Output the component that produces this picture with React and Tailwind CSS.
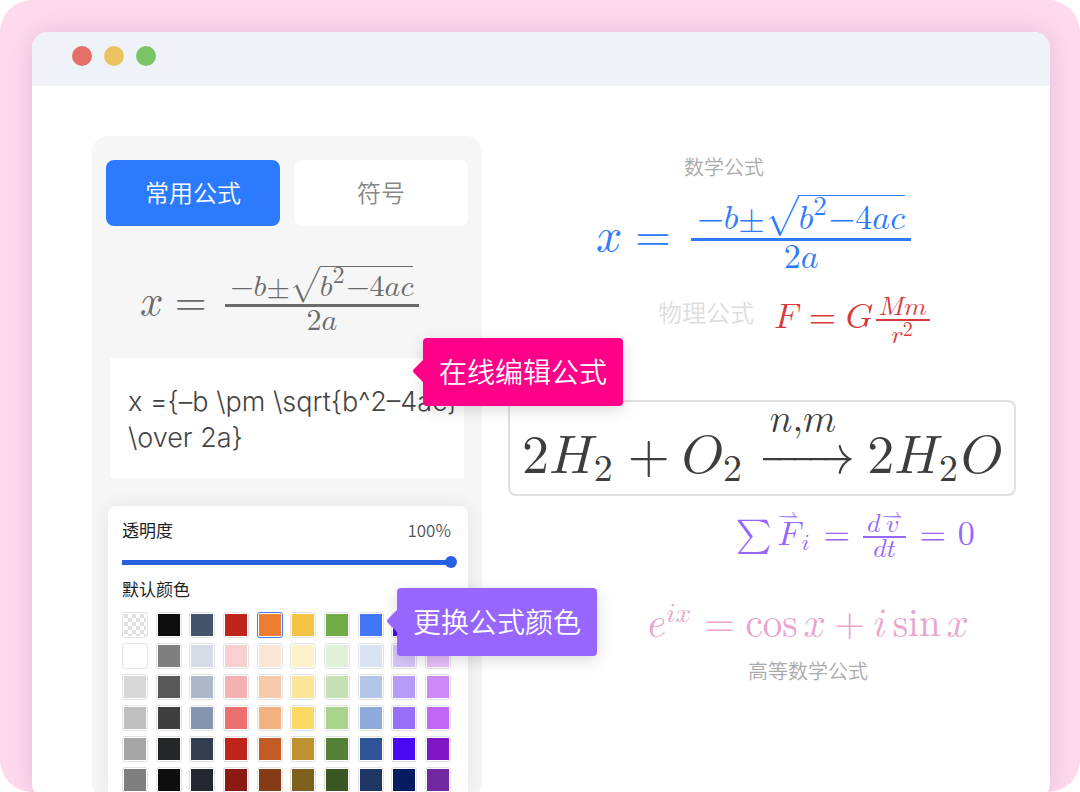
import { useState } from 'react';

const swatches = [
    ['transparent', '#0d0d0d', '#44546a', '#bf261b', '#ed7d31', '#f6c243', '#70ad47', '#4177f6', '#4a07f5', '#8b1fd0'],
    ['#ffffff', '#7f7f7f', '#d5dce6', '#f8d0d0', '#fbe5d7', '#fef2cd', '#e0f0d9', '#d9e3f4', '#d5c8fb', '#e6bdfb'],
    ['#d8d8d8', '#585858', '#adb8ca', '#f3b1b1', '#f7caac', '#fbe699', '#c5e0b3', '#b3c5e7', '#b59cf9', '#cd8af7'],
    ['#bfbfbf', '#3f3f3f', '#8495b1', '#ed7070', '#f3b182', '#f9da64', '#a9d28d', '#8ea9db', '#9870f7', '#bf66f6'],
    ['#a5a5a5', '#252628', '#333e50', '#bf261b', '#c55b24', '#bf9230', '#538135', '#2f5597', '#4a07f5', '#7f17c4'],
    ['#7f7f7f', '#0d0d0d', '#232830', '#8b1a12', '#843c16', '#7e611c', '#385723', '#203765', '#061c61', '#7029a0'],
];

const mathFont = 'font-["Latin_Modern_Math","Liberation_Serif",serif]';

// Operator without the surrounding spacing, as in script-size expressions
function Op({ children }) {
    return <mo lspace="0" rspace="0">{children}</mo>;
}

function Sub({ children }) {
    return <mpadded voffset="0.14em">{children}</mpadded>;
}

function Quadratic({ className, small, tiny }) {
    return (
        <math className={`${mathFont} ${className}`}>
            <mi>x</mi><mo>=</mo><mspace width="0.17em" />
            <mfrac linethickness="3px">
                <mpadded depth="0.2em" className={small}>
                    <mspace width="0.17em" /><Op>−</Op><mi>b</mi><Op>±</Op>
                    <msqrt>
                        <mspace height="0.9em" depth="0.15em" />
                        <msup><mi>b</mi><mn className={tiny}>2</mn></msup><Op>−</Op><mn>4</mn><mi>a</mi><mi>c</mi>
                    </msqrt>
                    <mspace width="0.12em" />
                </mpadded>
                <mpadded height="0.74em" className={small}><mn>2</mn><mi>a</mi></mpadded>
            </mfrac>
        </math>
    );
}

function Gravity({ className }) {
    return (
        <math className={`${mathFont} ${className}`}>
            <mi>F</mi><mspace width="0.07em" /><mo>=</mo><mi>G</mi><mspace width="0.07em" />
            <mfrac linethickness="2px">
                <mrow className="text-[26px]"><mspace width="0.12em" /><mi>M</mi><mi>m</mi><mspace width="0.12em" /></mrow>
                <msup className="text-[26px]"><mi>r</mi><mn className="text-[20px]">2</mn></msup>
            </mfrac>
        </math>
    );
}

function Water({ className }) {
    return (
        <math className={`${mathFont} ${className}`}>
            <mn>2</mn><msub><mi>H</mi><Sub><mn>2</mn></Sub></msub><mo>+</mo><msub><mi>O</mi><Sub><mn>2</mn></Sub></msub>
            <mover>
                <mo stretchy="true" lspace="0.17em">→</mo>
                <mpadded voffset="-0.12em"><mspace width="0.42em" /><mi>n</mi><Op>,</Op><mi>m</mi><mspace width="0.42em" /></mpadded>
            </mover>
            <mn>2</mn><msub><mi>H</mi><Sub><mn>2</mn></Sub></msub><mi>O</mi>
        </math>
    );
}

function Vector({ children }) {
    return (
        <mover><mi>{children}</mi><mo stretchy="false" className="text-[20px]">⇀</mo></mover>
    );
}

function Newton({ className }) {
    return (
        <math className={`${mathFont} ${className}`}>
            <mo>∑</mo>
            <msub><Vector>F</Vector><Sub><mspace width="0.1em" /><mi>i</mi></Sub></msub>
            <mspace width="0.07em" /><mo>=</mo><mspace width="0.12em" />
            <mfrac linethickness="2px">
                <mrow className="text-[26px]"><mspace width="0.14em" /><mi>d</mi><mspace width="0.07em" /><Vector>v</Vector><mspace width="0.14em" /></mrow>
                <mrow className="text-[26px]"><mi>d</mi><mi>t</mi></mrow>
            </mfrac>
            <mspace width="0.12em" /><mo>=</mo><mspace width="0.07em" /><mn>0</mn>
        </math>
    );
}

function Euler({ className }) {
    return (
        <math className={`${mathFont} ${className}`}>
            <msup><mi>e</mi><mrow><mi>i</mi><mi>x</mi></mrow></msup>
            <mo>=</mo><mi>cos</mi><mspace width="0.15em" /><mi>x</mi>
            <mo>+</mo><mi>i</mi><mspace width="0.15em" /><mi>sin</mi><mspace width="0.15em" /><mi>x</mi>
        </math>
    );
}

function Callout({ children, className, arrow }) {
    return (
        <div className={`absolute z-10 flex h-[68px] w-[200px] items-center justify-center rounded pb-0.5 text-[28px] font-[350] text-white shadow-[0_4px_16px_rgba(0,0,0,0.15)] ${className}`}>
            <svg className={`absolute -left-[10px] h-6 w-[11px] ${arrow}`} viewBox="0 0 11 24" fill="currentColor">
                <path d="M11 0v24L1 14q-2-2 0-4z" />
            </svg>
            {children}
        </div>
    );
}

function Swatch({ color, selected, onSelect }) {
    return (
        <button
            type="button"
            aria-label={color}
            onClick={onSelect}
            className={`size-[26px] rounded-[3px] border bg-white p-px ${selected ? 'border-[#4177f6]' : 'border-[#e2e2e2]'}`}
        >
            {color === 'transparent' ? (
                <span className="block size-[22px] bg-[repeating-conic-gradient(#fff_0_25%,#e0e0e0_0_50%)] bg-size-[8px_8px]" />
            ) : (
                <span className="block size-[22px]" style={{ backgroundColor: color }} />
            )}
        </button>
    );
}

export default function App() {
    const [tex, setTex] = useState('x ={–b \\pm \\sqrt{b^2–4ac}\n\\over 2a}');
    const [opacity, setOpacity] = useState(100);
    const [color, setColor] = useState('0-4');

    return (
        <main className='h-screen overflow-hidden rounded-[32px] bg-[#ffdaee] pt-8 pr-[30px] pl-8 font-["Noto_Sans_CJK_SC",sans-serif]'>
            <div className="min-h-[768px] overflow-hidden rounded-2xl bg-white shadow-[0_0_24px_rgba(120,80,140,0.22)]">
                <header className="flex h-[54px] items-start gap-3 bg-[#eff2f8] px-10 pt-[14px]">
                    <span className="size-5 rounded-full bg-[#e27069]" />
                    <span className="size-5 rounded-full bg-[#e9c362]" />
                    <span className="size-5 rounded-full bg-[#7cc267]" />
                </header>

                <div className="flex gap-[26px] pt-[50px] pr-[34px] pl-[60px]">
                    <section className="relative h-[662px] w-[390px] shrink-0 rounded-2xl bg-[#f6f6f6] pt-6">
                        <div className="flex gap-[14px] px-[14px] text-2xl font-[350]">
                            <button type="button" className="h-[66px] flex-1 rounded-lg bg-[#2c7bff] pb-0.5 text-white">常用公式</button>
                            <button type="button" className="h-[66px] flex-1 rounded-lg bg-white pb-0.5 text-[#888]">符号</button>
                        </div>

                        <div className="flex h-[132px] items-center pt-2.5 pl-12">
                            <Quadratic className="text-[41px] text-[#6b6b6b]" small="text-[30px]" tiny="text-[24px]" />
                        </div>

                        <textarea
                            aria-label="公式"
                            value={tex}
                            onChange={(e) => setTex(e.target.value)}
                            className='mx-[18px] block h-[120px] w-[354px] resize-none overflow-hidden bg-white py-[26px] pl-[18px] font-["Inter",sans-serif] text-[27px] leading-9 font-light text-[#444]'
                        />

                        <div className="mt-7 mr-[14px] ml-4 h-[292px] rounded-lg bg-white px-[14px] pt-3 shadow-[0_0_20px_rgba(0,0,0,0.08)]">
                            <div className="flex items-center justify-between pr-[3px] text-[17px] leading-6 text-[#222]">
                                <label htmlFor="opacity">透明度</label>
                                <output htmlFor="opacity" className="font-[350] text-[#555]">{opacity}%</output>
                            </div>
                            <input
                                id="opacity"
                                type="range"
                                value={opacity}
                                onChange={(e) => setOpacity(e.target.value)}
                                className="mt-[14px] block h-3 w-[335px] appearance-none bg-[linear-gradient(#2861e0,#2861e0)] bg-size-[330px_5px] bg-left bg-no-repeat [&::-webkit-slider-thumb]:size-3 [&::-webkit-slider-thumb]:appearance-none [&::-webkit-slider-thumb]:rounded-full [&::-webkit-slider-thumb]:bg-[#2861e0]"
                            />
                            <h2 className="mt-[9px] text-[17px] leading-6 text-[#222]">默认颜色</h2>
                            <div className="mt-[11px] flex flex-col gap-[5px]">
                                {swatches.map((row, r) => (
                                    <div key={r} className="flex w-[329px] justify-between">
                                        {row.map((c, i) => (
                                            <Swatch key={i} color={c} selected={color === `${r}-${i}`} onSelect={() => setColor(`${r}-${i}`)} />
                                        ))}
                                    </div>
                                ))}
                            </div>
                        </div>

                        <Callout className="top-[202px] left-[331px] bg-[#ff0088]" arrow="text-[#ff0088]">在线编辑公式</Callout>
                        <Callout className="top-[452px] left-[305px] bg-[#9666ff]" arrow="text-[#9666ff]">更换公式颜色</Callout>
                    </section>

                    <section className="flex min-w-0 flex-1 flex-col items-start pt-4">
                        <p className="ml-[176px] text-xl leading-[30px] font-[350] text-[#aaa]">数学公式</p>
                        <div className="ml-[88px] flex h-[96px] items-center">
                            <Quadratic className="text-[46px] text-[#2c7bff]" small="text-[34px]" tiny="text-[27px]" />
                        </div>
                        <div className="mt-3 ml-[150px] flex h-[60px] items-center gap-5 text-2xl font-[350] text-[#ddd]">
                            <span className="pb-4">物理公式</span>
                            <Gravity className="text-[35px] text-[#d93a3a]" />
                        </div>
                        <div className="mt-[50px] flex h-24 w-full items-center justify-center rounded-lg border-2 border-[#e0e0e0]">
                            <Water className="text-[54px] text-[#3d3d3d]" />
                        </div>
                        <div className="ml-[222px] flex h-[76px] items-center">
                            <Newton className="text-[34px] text-[#9666ff]" />
                        </div>
                        <div className="mt-7 ml-[140px] flex h-[44px] items-center">
                            <Euler className="text-[39px] text-[#e8a5cd]" />
                        </div>
                        <p className="mt-3 ml-[240px] text-xl leading-[30px] font-[350] text-[#aaa]">高等数学公式</p>
                    </section>
                </div>
            </div>
        </main>
    );
}
